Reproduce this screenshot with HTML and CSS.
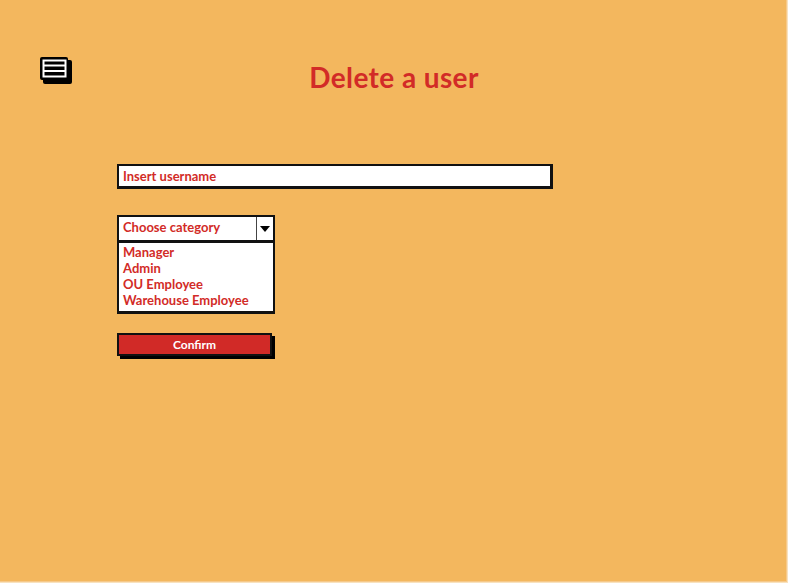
FILE: index.html
```html
<!DOCTYPE html>
<html>
<head>
<meta charset="utf-8">
<link rel="stylesheet" href="styles.css">
</head>
<body>
<div class="page">
  <header class="header">
    <div class="menu-icon">
      <svg width="34" height="29" viewBox="0 0 34 29">
        <rect x="4" y="4" width="29" height="24" rx="2" fill="#000"/>
        <rect x="1" y="1" width="28" height="23" rx="2" fill="#000"/>
        <rect x="4.5" y="4.5" width="22" height="16" fill="none" stroke="#fff" stroke-width="2"/>
        <line x1="5" y1="9.5" x2="26" y2="9.5" stroke="#fff" stroke-width="2"/>
        <line x1="5" y1="15" x2="26" y2="15" stroke="#fff" stroke-width="2"/>
      </svg>
    </div>
    <h1 class="title">Delete a user</h1>
    <div></div>
  </header>
  <main class="form">
    <div class="input">Insert username</div>
    <div class="select">
      <div class="select-head">
        <span class="select-label">Choose category</span>
        <span class="select-btn"><svg width="10" height="6" viewBox="0 0 10 6"><path d="M0 0H10L5 6Z" fill="#000"/></svg></span>
      </div>
      <ul class="select-list">
        <li>Manager</li>
        <li>Admin</li>
        <li>OU Employee</li>
        <li>Warehouse Employee</li>
      </ul>
    </div>
    <button class="confirm">Confirm</button>
  </main>
</div>
</body>
</html>
```

FILE: styles.css
```css
html, body {
  margin: 0;
  padding: 0;
  background: #f8e2bf;
}
body {
  font-family: Lato, "Open Sans", sans-serif;
}
.page {
  width: 786px;
  height: 581px;
  background: #f3b75e;
  border-right: 1px solid #f6c98a;
  border-bottom: 1px solid #f6c98a;
  box-sizing: content-box;
  overflow: hidden;
}
.header {
  display: grid;
  grid-template-columns: 1fr auto 1fr;
  align-items: start;
  padding-top: 56px;
}
.menu-icon {
  padding-left: 39px;
  height: 29px;
}
.menu-icon svg {
  display: block;
}
.title {
  margin: 5px 0 0 2px;
  font-size: 28px;
  line-height: 32px;
  font-weight: 700;
  color: #d22b27;
  letter-spacing: 0.4px;
}
.form {
  margin: 71px 0 0 117px;
  display: flex;
  flex-direction: column;
  align-items: flex-start;
}
.input {
  width: 436px;
  height: 25px;
  box-sizing: border-box;
  background: #fff;
  border: 2px solid #111;
  border-right-width: 3px;
  border-bottom-width: 3px;
  font-size: 13px;
  font-weight: 700;
  color: #d22b27;
  padding-left: 4px;
  line-height: 20px;
}
.select {
  margin-top: 26px;
  width: 158px;
}
.select-head {
  display: flex;
  height: 26px;
  box-sizing: border-box;
  background: #fff;
  border: 2px solid #111;
  border-bottom-width: 1px;
  border-right-width: 2px;
}
.select-label {
  flex: 1;
  font-size: 13px;
  font-weight: 700;
  color: #d22b27;
  padding-left: 4px;
  line-height: 21px;
}
.select-btn {
  width: 16px;
  border-left: 1px solid #444;
  display: flex;
  align-items: center;
  justify-content: center;
}
.select-list {
  list-style: none;
  margin: 0;
  padding: 1px 0 3px 4px;
  background: #fff;
  border: 2px solid #111;
  border-bottom-width: 3px;
  font-size: 13px;
  font-weight: 700;
  color: #d22b27;
  line-height: 16px;
}
.confirm {
  margin-top: 19px;
  width: 155px;
  height: 23px;
  background: #d12a27;
  border: 2px solid #111;
  box-shadow: 3px 3px 0 #000;
  color: #fff;
  font-family: Lato, "Open Sans", sans-serif;
  font-size: 12px;
  font-weight: 700;
  padding: 0;
  line-height: 18px;
}
```
